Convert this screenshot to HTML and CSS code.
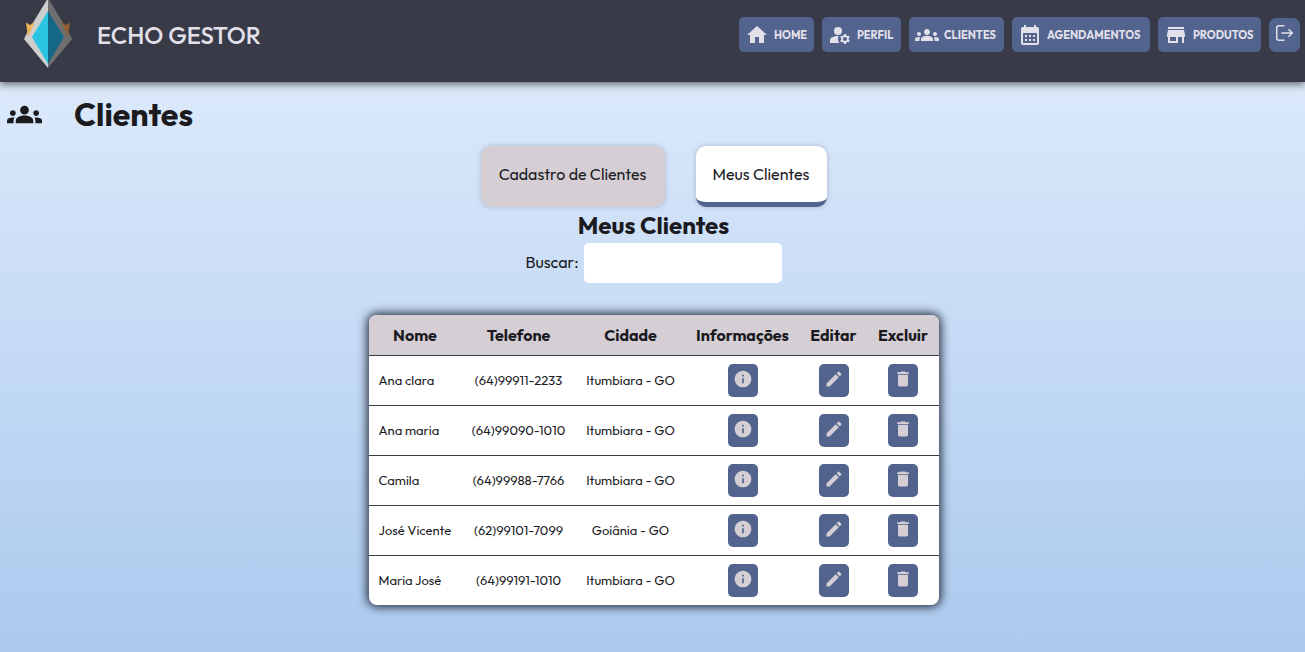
FILE: index.html
```html
<!DOCTYPE html>
<html lang="pt-BR">
<head>
<meta charset="utf-8">
<meta name="viewport" content="width=device-width, initial-scale=1">
<title>Echo Gestor - Clientes</title>
<link rel="stylesheet" href="styles.css">
</head>
<body>
<svg class="sprite" aria-hidden="true">
  <symbol id="home" viewBox="0 0 24 24"><path d="M10 20v-6h4v6h5v-8h3L12 3 2 12h3v8z"/></symbol>
  <symbol id="profile" viewBox="0 0 24 24"><circle cx="10" cy="8" r="4"/><path d="M10.67 13.02C10.45 13.01 10.23 13 10 13c-2.42 0-4.68.67-6.61 1.82-.88.52-1.39 1.5-1.39 2.53V20h9.26A6.96 6.96 0 0 1 10 16c0-1.07.25-2.07.67-2.98zM20.75 16c0-.22-.03-.42-.06-.63l1.14-1.01-1-1.73-1.45.49c-.32-.27-.68-.48-1.08-.63L18 11h-2l-.3 1.49c-.4.15-.76.36-1.08.63l-1.45-.49-1 1.73 1.14 1.01c-.03.21-.06.41-.06.63s.03.42.06.63l-1.14 1.01 1 1.73 1.45-.49c.32.27.68.48 1.08.63L16 21h2l.3-1.49c.4-.15.76-.36 1.08-.63l1.45.49 1-1.73-1.14-1.01c.03-.21.06-.41.06-.63zM17 18a2 2 0 1 1 0-4 2 2 0 0 1 0 4z"/></symbol>
  <symbol id="groups" viewBox="0 0 24 24"><path d="M12 12.75c1.63 0 3.07.39 4.24.9 1.08.48 1.76 1.56 1.76 2.73V18H6v-1.61c0-1.18.68-2.26 1.76-2.73 1.17-.52 2.61-.91 4.24-.91zM4 13c1.1 0 2-.9 2-2s-.9-2-2-2-2 .9-2 2 .9 2 2 2zm1.13 1.1c-.37-.06-.74-.1-1.13-.1-.99 0-1.93.21-2.78.58A2.01 2.01 0 0 0 0 16.43V18h4.5v-1.61c0-.83.23-1.61.63-2.29zM20 13c1.1 0 2-.9 2-2s-.9-2-2-2-2 .9-2 2 .9 2 2 2zm4 3.43c0-.81-.48-1.53-1.22-1.85A6.95 6.95 0 0 0 20 14c-.39 0-.76.04-1.13.1.4.68.63 1.46.63 2.29V18H24v-1.57zM12 6c1.66 0 3 1.34 3 3s-1.34 3-3 3-3-1.34-3-3 1.34-3 3-3z"/></symbol>
  <symbol id="calendar" viewBox="0 0 24 24"><path fill-rule="evenodd" d="M19 4h-1V2h-2v2H8V2H6v2H5c-1.11 0-2 .9-2 2v14a2 2 0 0 0 2 2h14c1.1 0 2-.9 2-2V6c0-1.1-.9-2-2-2zm0 16H5V10h14v10zM7 12h2v2H7zm4 0h2v2h-2zm4 0h2v2h-2zm-8 4h2v2H7zm4 0h2v2h-2zm4 0h2v2h-2z"/></symbol>
  <symbol id="store" viewBox="0 0 24 24"><path d="M20 4H4v2h16V4zm1 10v-2l-1-5H4l-1 5v2h1v6h10v-6h4v6h2v-6h1zm-9 4H6v-4h6v4z"/></symbol>
  <symbol id="exit" viewBox="0 0 18 18"><path fill="none" stroke="currentColor" stroke-width="1.500" d="M9 1.750H3.200Q1.250 1.750 1.250 3.700v10.600Q1.250 16.250 3.200 16.250H9M6 9h11M13 5.200 16.800 9 13 12.800"/></symbol>
  <symbol id="info" viewBox="0 0 24 24"><path d="M12 2C6.480 2 2 6.480 2 12s4.480 10 10 10 10-4.480 10-10S17.520 2 12 2zm1 15h-2v-6h2v6zm0-8h-2V7h2v2z"/></symbol>
  <symbol id="edit" viewBox="0 0 24 24"><path d="M3 17.250V21h3.750L17.810 9.940l-3.750-3.750L3 17.250zM20.710 7.040a1 1 0 0 0 0-1.410l-2.340-2.340a1 1 0 0 0-1.410 0l-1.830 1.830 3.750 3.750 1.830-1.830z"/></symbol>
  <symbol id="trash" viewBox="0 0 24 24"><path d="M6 19c0 1.100.9 2 2 2h8c1.100 0 2-.9 2-2V7H6v12zM19 4h-3.500l-1-1h-5l-1 1H5v2h14V4z"/></symbol>
</svg>
<header class="topbar">
  <a class="brand" href="#">
    <svg class="logo" viewBox="0 0 48 70" aria-hidden="true">
      <path fill="#cecece" d="M24-2v70L0 39l4-8z"/>
      <path fill="#6f6f6f" d="M24-2v70l24-29-4-8z"/>
      <path fill="#eeb45b" d="M2 22.500l4 2.500 5-3-7 15z"/>
      <path fill="#925f35" d="M46 22.500l-4 2.500-5-3 7 15z"/>
      <path fill="#2bc5e3" d="M24 11v53L8 37z"/>
      <path fill="#156786" d="M24 11v53l16-27z"/>
    </svg>
    <span>ECHO GESTOR</span>
  </a>
  <nav class="nav">
    <a class="nav-link nav-home" href="#"><svg class="icon"><use href="#home"/></svg><span>HOME</span></a>
    <a class="nav-link nav-profile" href="#"><svg class="icon"><use href="#profile"/></svg><span>PERFIL</span></a>
    <a class="nav-link nav-clients" href="#"><svg class="icon"><use href="#groups"/></svg><span>CLIENTES</span></a>
    <a class="nav-link nav-schedule" href="#"><svg class="icon"><use href="#calendar"/></svg><span>AGENDAMENTOS</span></a>
    <a class="nav-link nav-products" href="#"><svg class="icon"><use href="#store"/></svg><span>PRODUTOS</span></a>
    <button class="logout" type="button" aria-label="Sair"><svg class="exit-icon"><use href="#exit"/></svg></button>
  </nav>
</header>
<main>
  <div class="page-title"><svg class="title-icon" aria-hidden="true"><use href="#groups"/></svg><h1>Clientes</h1></div>
  <div class="tabs">
    <button class="tab tab-register" type="button">Cadastro de Clientes</button>
    <button class="tab tab-active" type="button">Meus Clientes</button>
  </div>
  <h2>Meus Clientes</h2>
  <div class="search"><label for="search">Buscar:</label><input id="search" type="text"></div>
  <table class="clients">
    <colgroup><col class="col-name"><col class="col-phone"><col class="col-city"><col class="col-info"><col class="col-edit"><col class="col-delete"></colgroup>
    <thead><tr><th>Nome</th><th>Telefone</th><th>Cidade</th><th>Informações</th><th>Editar</th><th>Excluir</th></tr></thead>
    <tbody>
      <tr><td>Ana clara</td><td>(64)99911-2233</td><td>Itumbiara - GO</td><td><button class="action" type="button" aria-label="Informações"><svg><use href="#info"/></svg></button></td><td><button class="action" type="button" aria-label="Editar"><svg><use href="#edit"/></svg></button></td><td><button class="action" type="button" aria-label="Excluir"><svg><use href="#trash"/></svg></button></td></tr>
      <tr><td>Ana maria</td><td>(64)99090-1010</td><td>Itumbiara - GO</td><td><button class="action" type="button" aria-label="Informações"><svg><use href="#info"/></svg></button></td><td><button class="action" type="button" aria-label="Editar"><svg><use href="#edit"/></svg></button></td><td><button class="action" type="button" aria-label="Excluir"><svg><use href="#trash"/></svg></button></td></tr>
      <tr><td>Camila</td><td>(64)99988-7766</td><td>Itumbiara - GO</td><td><button class="action" type="button" aria-label="Informações"><svg><use href="#info"/></svg></button></td><td><button class="action" type="button" aria-label="Editar"><svg><use href="#edit"/></svg></button></td><td><button class="action" type="button" aria-label="Excluir"><svg><use href="#trash"/></svg></button></td></tr>
      <tr><td>José Vicente</td><td>(62)99101-7099</td><td>Goiânia - GO</td><td><button class="action" type="button" aria-label="Informações"><svg><use href="#info"/></svg></button></td><td><button class="action" type="button" aria-label="Editar"><svg><use href="#edit"/></svg></button></td><td><button class="action" type="button" aria-label="Excluir"><svg><use href="#trash"/></svg></button></td></tr>
      <tr><td>Maria José</td><td>(64)99191-1010</td><td>Itumbiara - GO</td><td><button class="action" type="button" aria-label="Informações"><svg><use href="#info"/></svg></button></td><td><button class="action" type="button" aria-label="Editar"><svg><use href="#edit"/></svg></button></td><td><button class="action" type="button" aria-label="Excluir"><svg><use href="#trash"/></svg></button></td></tr>
    </tbody>
  </table>
</main>
</body>
</html>
```
FILE: styles.css
```css
* { box-sizing: border-box; margin: 0; }
body {
  min-height: 100vh;
  font-family: Outfit, Lato, sans-serif;
  font-size: 16px;
  color: #1b1b1f;
  background: linear-gradient(#e2edfc, #abcaee) no-repeat;
}
button, input { font: inherit; color: inherit; border: 0; }
a { color: inherit; text-decoration: none; }
svg { display: block; fill: currentColor; flex: none; }
.sprite { position: absolute; width: 0; height: 0; }

.topbar {
  display: flex;
  justify-content: space-between;
  align-items: flex-start;
  height: 82px;
  padding: 0 5px 0 24px;
  color: #e2e0eb;
  background: #393a47;
  box-shadow: 0 2px 8px rgba(0, 0, 0, .6);
}
.brand { display: flex; align-items: center; gap: 25px; font-size: 24px; font-weight: 500; }
.logo { width: 48px; height: 70px; }
.nav { display: flex; align-items: flex-end; gap: 8px; padding-top: 17px; }
.nav-link {
  display: flex;
  align-items: center;
  gap: 5px;
  height: 35px;
  padding: 0 6px;
  border-radius: 5px;
  background: #52648d;
  font-size: 11px;
  font-weight: 700;
}
.nav-home { min-width: 75px; }
.nav-profile { min-width: 79px; }
.nav-clients { min-width: 95px; }
.nav-schedule { min-width: 138px; }
.nav-products { min-width: 103px; }
.icon { width: 24px; height: 24px; }
.logout { width: 31px; height: 34px; padding: 6px; border-radius: 7px; background: #52648d; }
.exit-icon { width: 19px; height: 18px; margin-bottom: 4px; }

main { padding-left: 2px; }
.page-title { display: flex; align-items: center; gap: 32px; padding: 12px 5px; }
.title-icon { width: 35px; height: 35px; }
h1 { font-size: 32px; line-height: 40px; font-weight: 700; }
.tabs { display: flex; justify-content: center; gap: 31px; }
.tab {
  height: 61px;
  padding: 0 16px 5px;
  border-radius: 10px;
  background: #d5cfd5;
  box-shadow: 0 0 5px rgba(70, 80, 110, .3);
}
.tab-register { min-width: 184px; }
.tab-active { min-width: 131px; padding-bottom: 0; border-bottom: 5px solid #52648d; background: #fff; }
h2 { font-size: 24px; line-height: 36px; font-weight: 700; text-align: center; }
.search { display: flex; justify-content: center; align-items: center; gap: 4px; }
.search label { min-width: 54px; padding-bottom: 2px; }
.search input { width: 198px; height: 40px; padding: 0 10px; border-radius: 5px; background: #fff; }

.clients {
  width: 570px;
  margin: 32px auto 0;
  table-layout: fixed;
  border-collapse: collapse;
  border-radius: 8px;
  overflow: hidden;
  background: #fff;
  box-shadow: 0 0 10px 2px rgba(20, 25, 40, .9);
}
.col-name { width: 93px; }
.col-phone { width: 114px; }
.col-city { width: 110px; }
.col-info { width: 114px; }
.col-edit { width: 68px; }
.col-delete { width: 71px; }
th { height: 40px; padding: 0; background: #d5cfd5; font-size: 16px; text-align: center; }
td { height: 50px; padding: 0; border-top: 1px solid #393a47; font-size: 13px; text-align: center; }
td:first-child { padding-left: 10px; text-align: left; }
.action {
  display: inline-flex;
  justify-content: center;
  width: 30px;
  height: 33px;
  padding: 5px;
  border-radius: 5px;
  background: #52648d;
  color: #d5cfd5;
  vertical-align: middle;
}
.action svg { width: 20px; height: 20px; }
```
